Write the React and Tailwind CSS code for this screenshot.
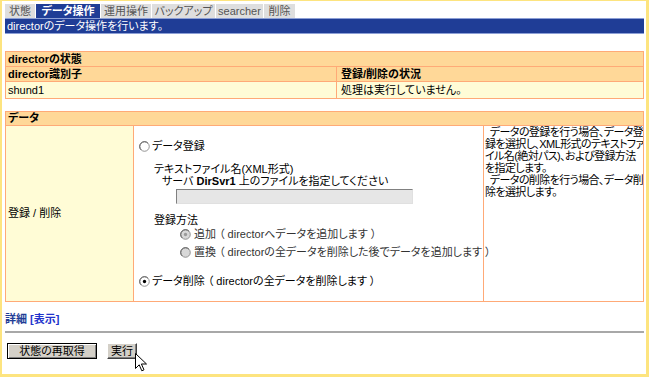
import { useState } from "react";

const tabs = [
    { label: "状態", w: "w-[30px]" },
    { label: "データ操作", w: "w-[64px]", active: true },
    { label: "運用操作", w: "w-[50px]" },
    { label: "バックアップ", w: "w-[63px]" },
    { label: "searcher", w: "w-[47px]" },
    { label: "削除", w: "w-[31px]" },
];

function Radio({ checked, disabled }) {
    return (
        <svg width="11" height="11" viewBox="0 0 12 12" className="shrink-0">
            <circle cx="6" cy="6" r="5.2" fill={disabled ? "#d8d8d8" : "#ffffff"} stroke="#8a8a8a" strokeWidth="1" />
            <path d="M2.3 9.7 A5.2 5.2 0 0 1 2.3 2.3 A5.2 5.2 0 0 1 9.7 2.3" fill="none" stroke="#5a5a5a" strokeWidth="1" />
            {checked && <circle cx="6" cy="6" r="1.8" fill={disabled ? "#9a9a9a" : "#000000"} />}
        </svg>
    );
}

export default function App() {
    const [mode, setMode] = useState("delete");

    return (
        <div className="relative w-[649px] h-[377px] overflow-hidden bg-white border-[#fde47f] border-t border-l-2 border-r-[3px] border-b-[3px] pl-[3px] pr-[2px] pt-[3px] text-[11px] text-black font-['Liberation_Sans','Noto_Sans_CJK_JP',sans-serif] [font-feature-settings:'palt']">
            {/* tabs */}
            <div className="flex gap-[1px] h-[14px]">
                {tabs.map(t => (
                    <div
                        key={t.label}
                        className={`${t.w} h-[14px] leading-[14px] text-center whitespace-nowrap ${t.active
                            ? "bg-[#1f3d96] text-white font-bold"
                            : "bg-[#dedede] text-[#555555]"}`}
                    >
                        {t.label}
                    </div>
                ))}
            </div>
            <div className="h-[16px] leading-[14px] bg-[#1f3d96] border-y border-[#8c9fd6] text-white pl-[2px]">
                directorのデータ操作を行います。
            </div>

            {/* director status */}
            <div className="mt-[17px] border border-[#ffaa77]">
                <div className="h-[14px] leading-[14px] bg-[#ffd898] font-bold pl-[2px]">directorの状態</div>
                <div className="flex h-[15px] leading-[14px] bg-[#ffd898] font-bold border-t border-[#ffaa77]">
                    <div className="w-[331px] shrink-0 pl-[2px] border-r border-[#ffaa77]">director識別子</div>
                    <div className="flex-1 pl-[4px]">登録/削除の状況</div>
                </div>
                <div className="flex h-[17px] leading-[16px] bg-[#fffcd6] border-t border-[#ffaa77]">
                    <div className="w-[331px] shrink-0 pl-[2px] border-r border-[#ffaa77]">shund1</div>
                    <div className="flex-1 pl-[4px]">処理は実行していません。</div>
                </div>
            </div>

            {/* data */}
            <div className="mt-[12px] border border-[#ffaa77]">
                <div className="h-[13px] leading-[13px] bg-[#ffd898] font-bold pl-[2px]">データ</div>
                <div className="flex h-[176px] border-t border-[#ffaa77]">
                    <div className="w-[128px] shrink-0 bg-[#fffcd6] border-r border-[#ffaa77] flex items-center pl-[2px]">
                        登録 / 削除
                    </div>
                    <div className="flex-1 min-w-0 flex flex-col pl-[5px] whitespace-nowrap">
                        <label className="flex items-center gap-[2px] mt-[13px] h-[14px]" onClick={() => setMode("add")}>
                            <Radio checked={mode === "add"} />
                            <span>データ登録</span>
                        </label>
                        <div className="ml-[15px] mt-[10px] leading-[12px]">
                            <div>テキストファイル名(XML形式)</div>
                            <div className="ml-[8px]">サーバ <b>DirSvr1</b> 上のファイルを指定してください</div>
                            <div className="ml-[22px] mt-[2px] w-[237px] h-[15px] bg-[#e6e6e6] border border-t-[#808080] border-l-[#808080] border-r-[#e0e0e0] border-b-[#e0e0e0]" />
                            <div className="mt-[10px]">登録方法</div>
                            <div className="ml-[26px] mt-[1px] flex items-center gap-[3px] h-[14px] text-[#333333]">
                                <Radio checked disabled />
                                <span>追加 （ directorへデータを追加します ）</span>
                            </div>
                            <div className="ml-[26px] mt-[4px] flex items-center gap-[3px] h-[14px] text-[#333333]">
                                <Radio disabled />
                                <span>置換 （ directorの全データを削除した後でデータを追加します ）</span>
                            </div>
                        </div>
                        <label className="flex items-center gap-[2px] mt-[15px] h-[14px]" onClick={() => setMode("delete")}>
                            <Radio checked={mode === "delete"} />
                            <span>データ削除 （ directorの全データを削除します ）</span>
                        </label>
                    </div>
                    <div className="w-[160px] shrink-0 border-l border-[#ffaa77] leading-[12px] pl-[1px] whitespace-pre overflow-hidden tracking-[-0.6px]">
                        <div>{"  データの登録を行う場合、データ登"}</div>
                        <div>録を選択し、XML形式のテキストファ</div>
                        <div>イル名(絶対パス)、および登録方法</div>
                        <div>を指定します。</div>
                        <div>{"  データの削除を行う場合、データ削"}</div>
                        <div>除を選択します。</div>
                    </div>
                </div>
            </div>

            {/* details link */}
            <div className="mt-[10px] h-[14px] leading-[14px] font-bold">
                <span className="text-[#1f3d96]">詳細</span>{" "}
                <span className="text-[#2233cc]">[表示]</span>
            </div>
            <div className="mt-[5px] border-t-2 border-[#a8a8a8]" />

            {/* buttons */}
            <div className="flex mt-[10px] pl-[2px] gap-[10px]">
                <button className="w-[90px] h-[16px] leading-[12px] text-[11px] bg-[#d4d0c8] border border-black shadow-[inset_1px_1px_0_#ffffff,inset_-1px_-1px_0_#808080]">
                    状態の再取得
                </button>
                <button className="w-[30px] h-[16px] leading-[12px] text-[11px] bg-[#d4d0c8] border border-t-white border-l-white border-r-[#404040] border-b-[#404040] shadow-[inset_-1px_-1px_0_#808080]">
                    実行
                </button>
            </div>

            {/* mouse cursor */}
            <svg className="absolute left-[133px] top-[352px]" width="13" height="20" viewBox="0 0 13 20">
                <path d="M0.5 0.5 L0.5 15.5 L4.2 11.8 L6.8 17.8 L9 16.8 L6.4 11 L11.5 11 Z" fill="#ffffff" stroke="#000000" strokeWidth="1" strokeLinejoin="miter" />
            </svg>
        </div>
    );
}
